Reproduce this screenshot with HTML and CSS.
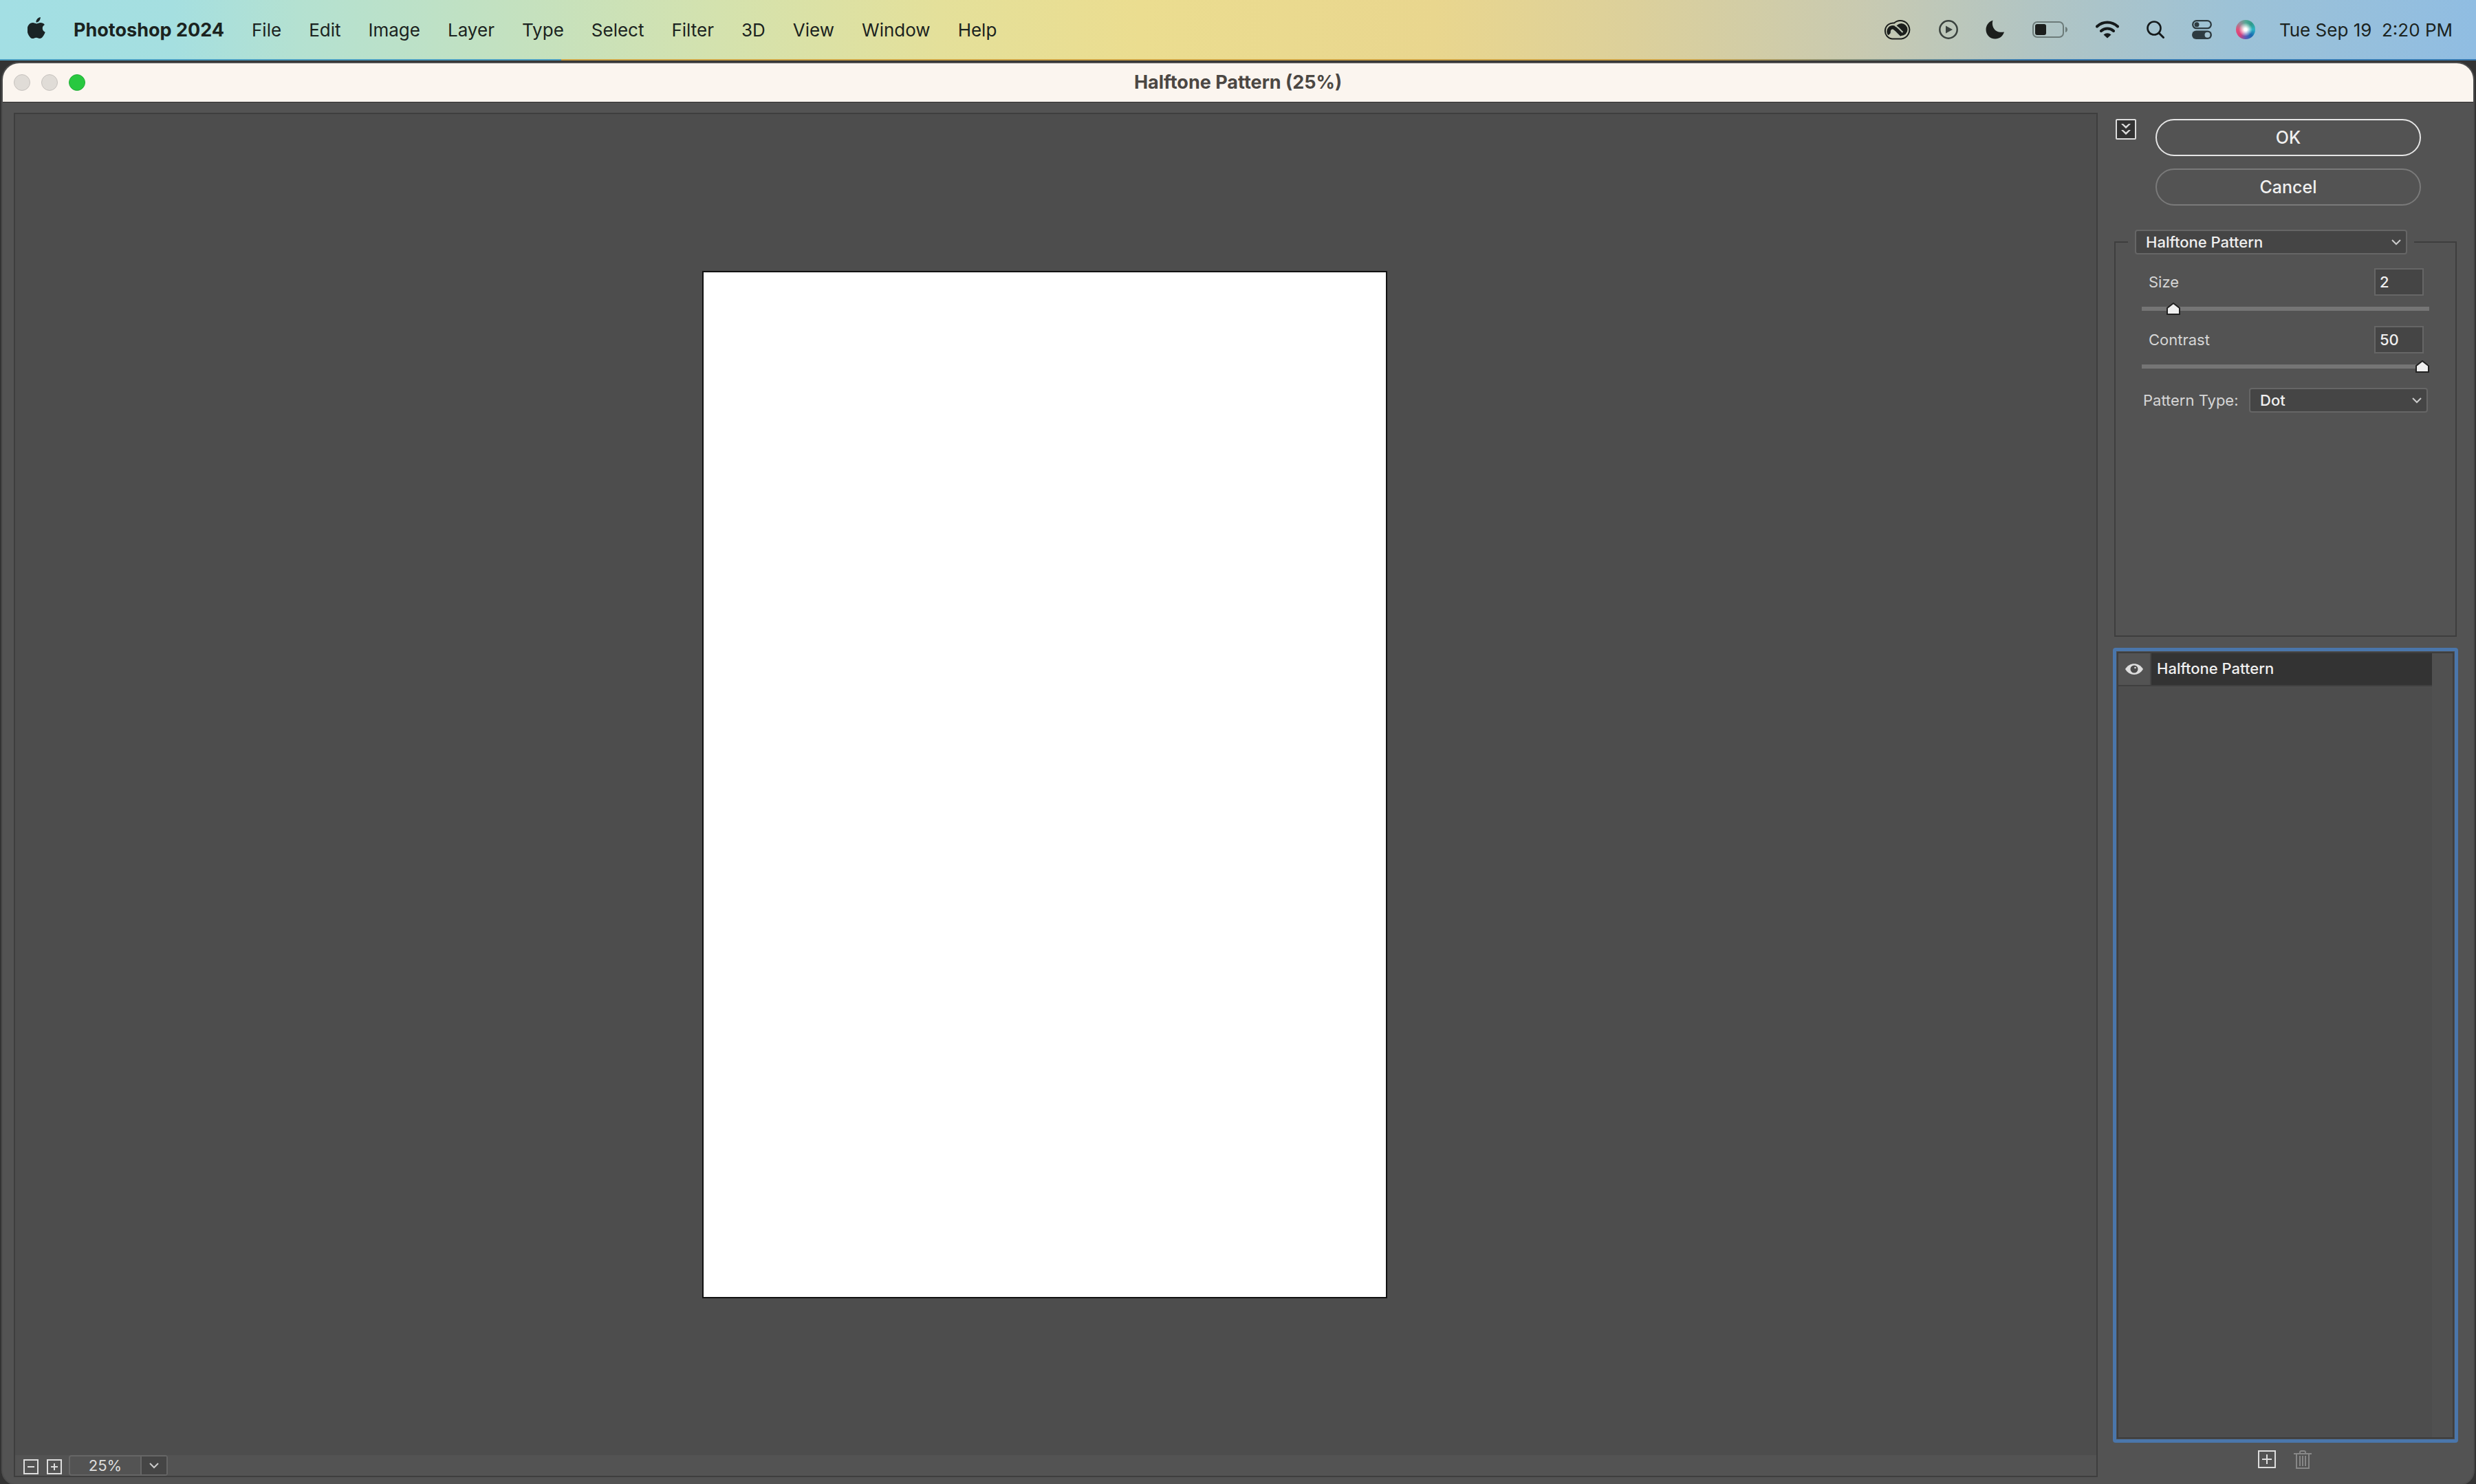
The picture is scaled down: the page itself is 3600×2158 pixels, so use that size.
FILE: index.html
```html
<!DOCTYPE html>
<html lang="en">

<head>
    <meta charset="UTF-8">
    <meta name="viewport" content="width=device-width, initial-scale=1.0">
    <title>Halftone Pattern (25%)</title>
    <link rel="stylesheet" href="styles.css">
</head>

<body>
    <header class="menubar">
        <svg class="apple" viewBox="0 0 26 32">
            <path d="M18.8 0c.2 2-.6 3.900-1.700 5.300-1.200 1.400-2.900 2.400-4.700 2.300-.2-1.900.7-3.900 1.800-5.100C15.400 1.100 17.300.1 18.800 0zM24.900 10.900c-2 1.200-3.200 3-3.100 5.200 0 2.700 1.500 4.700 3.900 5.700-.5 1.700-1.400 3.400-2.400 5-1.400 2.100-2.900 4.200-5.200 4.200-2.200.1-2.900-1.300-5.400-1.300s-3.300 1.300-5.400 1.400c-2.200.1-3.900-2.200-5.300-4.300C-.9 22.500-1.500 15.100 1.700 11.300c1.500-2 3.800-3.200 6.100-3.200 2.300 0 3.700 1.300 5.500 1.300 1.800 0 3-1.300 5.700-1.300 2.200 0 4.400 1 5.900 2.800z" />
        </svg>
        <nav class="menus">
            <a class="app-name" href="#">Photoshop 2024</a>
            <a href="#">File</a>
            <a href="#">Edit</a>
            <a href="#">Image</a>
            <a href="#">Layer</a>
            <a href="#">Type</a>
            <a href="#">Select</a>
            <a href="#">Filter</a>
            <a href="#">3D</a>
            <a href="#">View</a>
            <a href="#">Window</a>
            <a href="#">Help</a>
        </nav>
        <div class="status">
            <!-- creative cloud -->
            <svg width="40" height="30" viewBox="0 0 40 30">
                <path d="M12 28.500A11.500 11.500 0 1 1 15 5.500 13.300 13.300 0 1 1 25.500 28.500z" fill="none" stroke="#1b1e1c" stroke-width="2" />
                <circle cx="25.500" cy="15" r="9" fill="#1b1e1c" />
                <path d="M8.500 21.500A5.800 5.800 0 0 1 15.500 12.500L26 23" fill="none" stroke="#1b1e1c" stroke-width="5.500" />
                <path d="M10.500 21.500c0-5 4-5 6-3l7 7" fill="none" stroke="#bcc5b4" stroke-width="2.200" />
                <path d="M16.500 9.500c2 .5 3.500 2 5 3.500l6 6" fill="none" stroke="#bcc5b4" stroke-width="2" />
            </svg>
            <!-- now playing -->
            <svg width="28" height="28" viewBox="0 0 28 28">
                <circle cx="14" cy="14" r="12.700" fill="none" stroke="#3a423e" stroke-width="2.500" />
                <path d="M10 8.500v11l10-5.500z" fill="#3a423e" />
            </svg>
            <!-- focus -->
            <svg width="28" height="28" viewBox="0 0 28 28">
                <path d="M10.500.5C8 9 13 20 27 17.500 25 24 20 27.500 14 27.500 6 27.500.500 21.500.500 14 .500 8 4.500 2.500 10.500.500z" fill="#1b1e1c" />
            </svg>
            <!-- battery -->
            <svg width="52" height="24" viewBox="0 0 52 24">
                <rect x="1" y="1" width="44" height="22" rx="6" fill="none" stroke="#6c7b79" stroke-width="2" />
                <rect x="4" y="4" width="16" height="16" rx="3" fill="#1b1e1c" />
                <path d="M48 8c4 1 4 7 0 8z" fill="#6c7b79" />
            </svg>
            <!-- wifi -->
            <svg width="34" height="26" viewBox="0 0 34 26">
                <path d="M2 8.500a21.500 21.500 0 0 1 30 0M8 15a13 13 0 0 1 18 0" fill="none" stroke="#151a1b" stroke-width="4" stroke-linecap="round" />
                <path d="M11.500 20.500a8 8 0 0 1 11 0L17 25.500z" fill="#151a1b" />
            </svg>
            <!-- search -->
            <svg width="26" height="26" viewBox="0 0 26 26">
                <circle cx="11" cy="11" r="9.500" fill="none" stroke="#151a1b" stroke-width="2.600" />
                <path d="M18 18l6.500 6.500" stroke="#151a1b" stroke-width="3" stroke-linecap="round" />
            </svg>
            <!-- control center -->
            <svg width="29" height="28" viewBox="0 0 29 28">
                <rect x="1.200" y="1.200" width="26.600" height="11" rx="5.500" fill="none" stroke="#2e3b41" stroke-width="2.300" />
                <circle cx="7" cy="6.700" r="3.500" fill="#2e3b41" />
                <rect x="0" y="15.500" width="29" height="12.500" rx="6.200" fill="#2e3b41" />
                <circle cx="22.500" cy="21.700" r="4" fill="#a3c1cf" />
            </svg>
            <!-- siri -->
            <span class="siri"></span>
            <time class="clock">Tue Sep 19&nbsp; 2:20 PM</time>
        </div>
    </header>

    <main class="window">
        <div class="titlebar">
            <div class="lights">
                <span class="light"></span>
                <span class="light"></span>
                <span class="light green"></span>
            </div>
            <h1>Halftone Pattern (25%)</h1>
        </div>

        <div class="content">
            <section class="preview">
                <div class="stage">
                    <div class="artboard"></div>
                </div>
                <div class="zoombar">
                    <button class="icon-btn" aria-label="Zoom out">
                        <svg width="22" height="22" viewBox="0 0 22 22"><path d="M1 1h20v20H1zM6 11h10" /></svg>
                    </button>
                    <button class="icon-btn" aria-label="Zoom in">
                        <svg width="22" height="22" viewBox="0 0 22 22"><path d="M1 1h20v20H1zM6 11h10M11 6v10" /></svg>
                    </button>
                    <div class="zoom-combo">
                        <input type="text" value="25%" aria-label="Zoom level">
                        <button aria-label="Zoom presets">
                            <svg width="14" height="9" viewBox="0 0 14 9"><path d="M1 1l6 6 6-6" /></svg>
                        </button>
                    </div>
                </div>
            </section>

            <aside class="sidebar">
                <div class="actions">
                    <button class="collapse" aria-label="Hide filter thumbnails">
                        <svg width="16" height="18" viewBox="0 0 16 18"><path d="M1 1h3l4 3.500L12 1h3L8 8zM1 10h3l4 3.500 4-3.500h3l-7 7z" /></svg>
                    </button>
                    <div class="pills">
                        <button class="pill primary">OK</button>
                        <button class="pill">Cancel</button>
                    </div>
                </div>

                <fieldset class="settings">
                    <legend>
                        <select class="filter-select" aria-label="Filter">
                            <option>Halftone Pattern</option>
                        </select>
                    </legend>
                    <div class="field">
                        <label for="size">Size</label>
                        <input type="text" id="size" value="2">
                    </div>
                    <input class="slider" type="range" min="1" max="12" value="2" aria-label="Size">
                    <div class="field">
                        <label for="contrast">Contrast</label>
                        <input type="text" id="contrast" value="50">
                    </div>
                    <input class="slider" type="range" min="0" max="50" value="50" aria-label="Contrast">
                    <div class="type-row">
                        <label for="pattern">Pattern Type:</label>
                        <select id="pattern">
                            <option>Dot</option>
                        </select>
                    </div>
                </fieldset>

                <div class="effects">
                    <div class="effect-list">
                        <div class="effect">
                            <button class="eye" aria-label="Toggle visibility">
                                <svg width="26" height="16" viewBox="0 0 26 16">
                                    <path d="M0 8C6-2.500 20-2.500 26 8 20 18.500 6 18.500 0 8z" fill="#ddd" />
                                    <circle cx="13" cy="8" r="5.500" fill="#4a4a4a" />
                                    <circle cx="14.500" cy="6" r="1.300" fill="#ddd" />
                                </svg>
                            </button>
                            <span class="effect-name">Halftone Pattern</span>
                        </div>
                    </div>
                    <div class="gutter"></div>
                </div>

                <div class="effect-tools">
                    <button class="icon-btn" aria-label="New effect layer">
                        <svg width="26" height="26" viewBox="0 0 26 26"><path d="M1 1h24v24H1zM6 13h14M13 6v14" /></svg>
                    </button>
                    <button class="icon-btn off" aria-label="Delete effect layer" disabled>
                        <svg width="26" height="27" viewBox="0 0 26 27"><path d="M0 5h26M4 5v21h18V5M9 5V3q0-2 2-2h4q2 0 2 2v2M9 8v15M13 8v15M17 8v15" /></svg>
                    </button>
                </div>
            </aside>
        </div>
    </main>
</body>

</html>
```

FILE: styles.css
```css
* {
    margin: 0;
    padding: 0;
    box-sizing: border-box;
}

body {
    display: flex;
    flex-direction: column;
    height: 100vh;
    overflow: hidden;
    background: #333;
    font-family: Inter, "Liberation Sans", sans-serif;
    font-size: 22px;
    color: #f0f0f0;
}

button,
input,
select {
    font: inherit;
    color: inherit;
    background: none;
    border: none;
    outline: none;
}

svg {
    display: block;
    flex: none;
}

/* menu bar */
.menubar {
    display: flex;
    flex: none;
    align-items: center;
    height: 88px;
    padding: 0 34px 2px 40px;
    background:
        linear-gradient(90deg, #4a9cc0 0 816px, #cda244 816px 68%, #3478b0 82%) bottom / 100% 2px no-repeat,
        linear-gradient(90deg, #a3dfe4 0%, #a5dfe0 7%, #b4e1d1 12%, #c4e1bf 21%, #d4e2ae 29%, #e4e09a 38%, #ebdd90 46%, #e9d68e 58%, #dcd09b 66%, #c9cab0 75%, #b2c5c3 82%, #9dc2d6 90%, #90bde2 100%);
    color: #1b2320;
    font-size: 26px;
}

.apple {
    width: 26px;
    height: 32px;
    margin-bottom: 4px;
    fill: #1a2425;
}

.menus {
    display: flex;
    align-items: baseline;
    gap: 40px;
    margin-left: 41px;
}

.menus a {
    color: inherit;
    text-decoration: none;
    white-space: nowrap;
}

.menus .app-name {
    font-size: 27px;
    font-weight: 700;
}

.status {
    display: flex;
    align-items: center;
    gap: 40px;
    margin-left: auto;
}

.siri {
    width: 28px;
    height: 28px;
    margin-left: -5px;
    border-radius: 50%;
    background:
        radial-gradient(circle at 50% 50%, #fff 0 10%, rgba(255, 255, 255, 0) 50%),
        conic-gradient(#52a795, #2f9a8a, #2bb4c4, #1769b0, #5a5ab8, #d8407c, #e0507a, #9a8a98, #52a795);
}

.clock {
    margin-left: -5px;
    white-space: nowrap;
}

/* filter gallery window */
.window {
    display: flex;
    flex: 1;
    flex-direction: column;
    min-height: 0;
    margin: 4px 4px 0;
    background: #535353;
    border-radius: 24px 24px 20px 20px;
    box-shadow: 0 0 0 2px #4d4d4d;
    overflow: hidden;
}

.titlebar {
    display: grid;
    grid-template-columns: 1fr auto 1fr;
    flex: none;
    align-items: center;
    height: 57px;
    padding: 0 16px 1px;
    background: #fbf5ef;
    border-bottom: 1px solid #2f2f2f;
}

.titlebar h1 {
    font-size: 27px;
    font-weight: 700;
    line-height: 32px;
    color: #4b4743;
}

.lights {
    display: flex;
    gap: 16px;
}

.light {
    width: 24px;
    height: 24px;
    border: 1px solid #c5c1bd;
    border-radius: 50%;
    background: #e0dcd7;
}

.light.green {
    border-color: #24ae38;
    background: #28c840;
}

.content {
    display: flex;
    flex: 1;
    gap: 22px;
    min-height: 0;
    padding: 15px 22px 10px 16px;
}

/* preview */
.preview {
    display: flex;
    flex: 1;
    flex-direction: column;
    border: 2px solid #3e3e3e;
    background: #4d4d4d;
}

.stage {
    display: flex;
    flex: 1;
    align-items: center;
    justify-content: center;
    padding-right: 32px;
}

.artboard {
    height: 76.6%;
    aspect-ratio: 2 / 3;
    background: #fff;
    border: 2px solid #111;
}

.zoombar {
    display: flex;
    align-items: center;
    height: 30px;
    padding-left: 12px;
    background: #535353;
}

.icon-btn svg {
    fill: none;
    stroke: #ddd;
    stroke-width: 2;
}

.icon-btn.off svg {
    stroke: #878787;
}

.zoombar .icon-btn {
    margin: 4px 12px 0 0;
}

.zoom-combo {
    display: flex;
    height: 30px;
    border: 2px solid #666;
    border-radius: 4px;
    margin-left: -2px;
}

.zoom-combo input {
    width: 102px;
    text-align: center;
    color: #ddd;
}

.zoom-combo button {
    display: grid;
    place-items: center;
    width: 38px;
    border-left: 2px solid #666;
    background: #454545;
}

.zoom-combo path {
    fill: none;
    stroke: #ccc;
    stroke-width: 2;
}

/* sidebar */
.sidebar {
    display: flex;
    flex: none;
    flex-direction: column;
    width: 502px;
}

.actions {
    display: flex;
    gap: 28px;
    align-items: flex-start;
    padding: 9px 0 0 4px;
}

.collapse {
    display: grid;
    place-items: center;
    width: 30px;
    height: 30px;
    border: 2px solid #ddd;
    border-radius: 2px;
    background: #333;
}

.collapse path {
    fill: #ddd;
}

.pills {
    display: flex;
    flex-direction: column;
    gap: 18px;
    width: 386px;
}

.pill {
    height: 54px;
    border: 2px solid #7a7a7a;
    border-radius: 27px;
    font-size: 25px;
    font-weight: 500;
}

.pill.primary {
    border-color: #e6e6e6;
}

.settings {
    height: 592px;
    min-width: 0;
    margin: 35px 2px 0;
    padding: 20px 38px 0;
    border: 2px solid #3e3e3e;
}

.settings legend {
    margin-left: -20px;
    padding: 0 10px;
}

select {
    height: 36px;
    padding-left: 14px;
    border: 2px solid #666;
    border-radius: 4px;
    appearance: none;
    font-weight: 500;
    background: #454545 url("data:image/svg+xml,%3Csvg xmlns='http://www.w3.org/2000/svg' width='14' height='9'%3E%3Cpath d='M1 1l6 6 6-6' fill='none' stroke='%23ccc' stroke-width='2'/%3E%3C/svg%3E") right 7px center no-repeat;
}

.filter-select {
    display: block;
    width: 396px;
}

.field {
    display: flex;
    align-items: center;
    justify-content: space-between;
    padding: 0 8px 0 10px;
}

label {
    color: #d6d6d6;
    white-space: nowrap;
}

.field input {
    width: 72px;
    height: 40px;
    padding-left: 6px;
    border: 2px solid #666;
    background: #454545;
    font-weight: 500;
}

.slider {
    display: block;
    width: 100%;
    height: 18px;
    margin: 10px 0 16px;
    appearance: none;
    background: linear-gradient(#757575, #757575) center / 100% 6px no-repeat;
}

.slider::-webkit-slider-thumb {
    appearance: none;
    width: 20px;
    height: 18px;
    background: url("data:image/svg+xml,%3Csvg xmlns='http://www.w3.org/2000/svg' width='20' height='18'%3E%3Cpath d='M1 17V8l9-7 9 7v9z' fill='%23f0f0f0' stroke='%23222' stroke-width='2'/%3E%3C/svg%3E") no-repeat;
}

.type-row {
    display: flex;
    align-items: center;
    justify-content: space-between;
    margin-top: 22px;
    padding: 0 2px;
}

.type-row select {
    width: 260px;
}

/* applied effects */
.effects {
    display: flex;
    flex: 1;
    margin-top: 16px;
    border: 5px solid #4a76ab;
    border-radius: 4px;
    outline: 2px solid #3e3e3e;
    outline-offset: -8px;
    padding: 3px;
    background: #4d4d4d;
}

.effect-list {
    flex: 1;
}

.effect {
    display: flex;
    border-bottom: 2px solid #404040;
}

.eye {
    display: grid;
    place-items: center;
    width: 48px;
    height: 46px;
    border-right: 2px solid #454545;
    background: #535353;
}

.effect-name {
    flex: 1;
    padding-left: 8px;
    font-weight: 500;
    line-height: 44px;
    background: #333;
}

.gutter {
    width: 30px;
    background: #505050;
}

.effect-tools {
    display: flex;
    align-items: center;
    justify-content: center;
    gap: 26px;
    height: 50px;
    padding: 0 2px 2px 0;
}
```
